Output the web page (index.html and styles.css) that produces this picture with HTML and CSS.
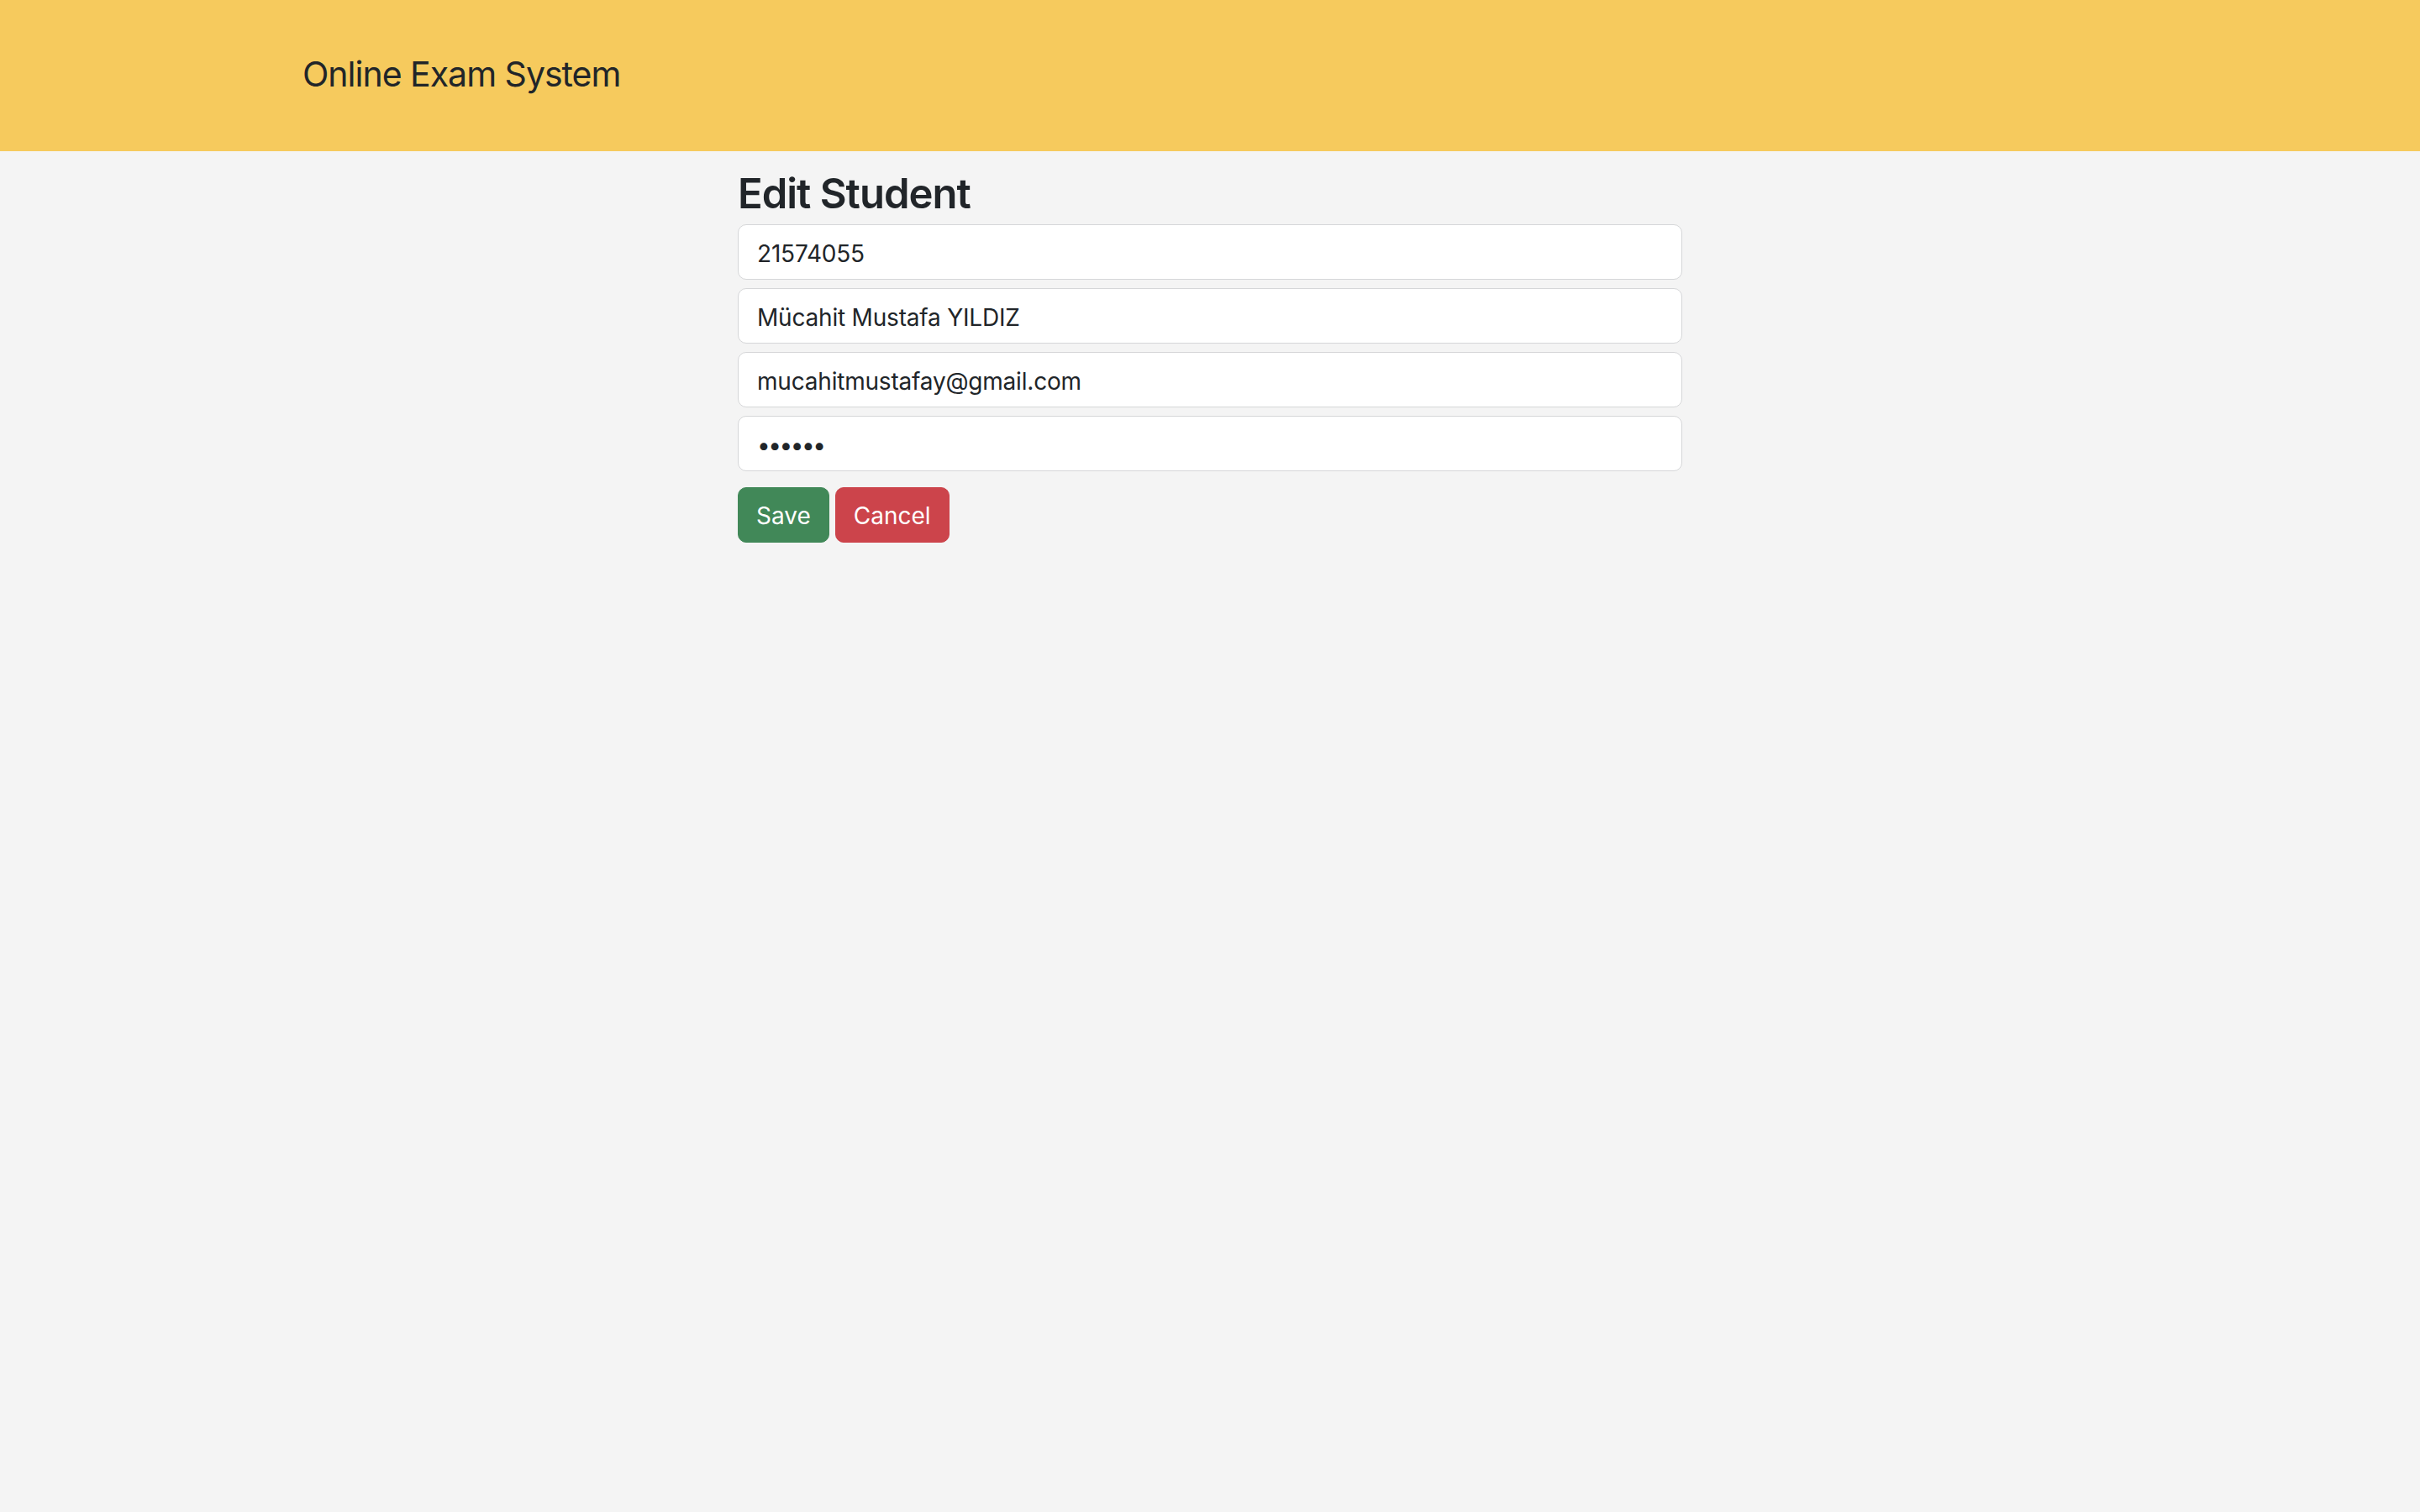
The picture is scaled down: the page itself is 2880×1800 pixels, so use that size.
FILE: index.html
```html
<!DOCTYPE html>
<html lang="tr">
<head>
<meta charset="utf-8">
<title>Edit Student</title>
<link rel="stylesheet" href="styles.css">
</head>
<body>
<header class="topbar">
  <div class="brand">Online Exam System</div>
</header>
<main class="content">
  <h2 class="title">Edit Student</h2>
  <form class="form">
    <input class="field" type="text" value="21574055">
    <input class="field" type="text" value="Mücahit Mustafa YILDIZ">
    <input class="field" type="email" value="mucahitmustafay@gmail.com">
    <input class="field field-password" type="password" value="123456">
    <div class="actions">
      <button type="button" class="btn btn-save">Save</button>
      <button type="button" class="btn btn-cancel">Cancel</button>
    </div>
  </form>
</main>
</body>
</html>
```

FILE: styles.css
```css
html, body {
  margin: 0;
  padding: 0;
}
body {
  background: #f4f4f4;
  color: #212529;
  font-family: Inter, "Noto Sans", "Liberation Sans", sans-serif;
  min-height: 1800px;
}
.topbar {
  height: 180px;
  box-sizing: border-box;
  background: #f6ca5d;
  padding: 57px 0 0 360px;
}
.brand {
  font-size: 41px;
  line-height: 63px;
  color: #212529;
  font-weight: 400;
  letter-spacing: -1px;
}
.content {
  width: 1124px;
  margin: 0 auto;
  padding-top: 21px;
}
.title {
  margin: 0 0 6px 0;
  font-size: 49px;
  line-height: 60px;
  font-weight: 600;
  letter-spacing: -1px;
}
.form {
  display: flex;
  flex-direction: column;
  gap: 10px;
}
.field {
  box-sizing: border-box;
  width: 100%;
  height: 66px;
  padding: 3px 22px 0;
  border: 1px solid #d5d6d8;
  border-radius: 10px;
  background: #fff;
  color: #212529;
  font-family: Inter, "Noto Sans", "Liberation Sans", sans-serif;
  font-size: 28px;
  letter-spacing: -0.2px;
  outline: none;
}
.field-password {
  letter-spacing: -2.5px;
}
.actions {
  display: flex;
  gap: 7px;
  margin-top: 9px;
}
.btn {
  height: 66px;
  padding: 2px 21px 0;
  border: 1px solid transparent;
  border-radius: 10px;
  color: #fff;
  font-family: Inter, "Noto Sans", "Liberation Sans", sans-serif;
  font-size: 28px;
  cursor: pointer;
}
.btn-save {
  background: #418858;
  border-color: #418858;
}
.btn-cancel {
  background: #cc444b;
  border-color: #cc444b;
}
```
